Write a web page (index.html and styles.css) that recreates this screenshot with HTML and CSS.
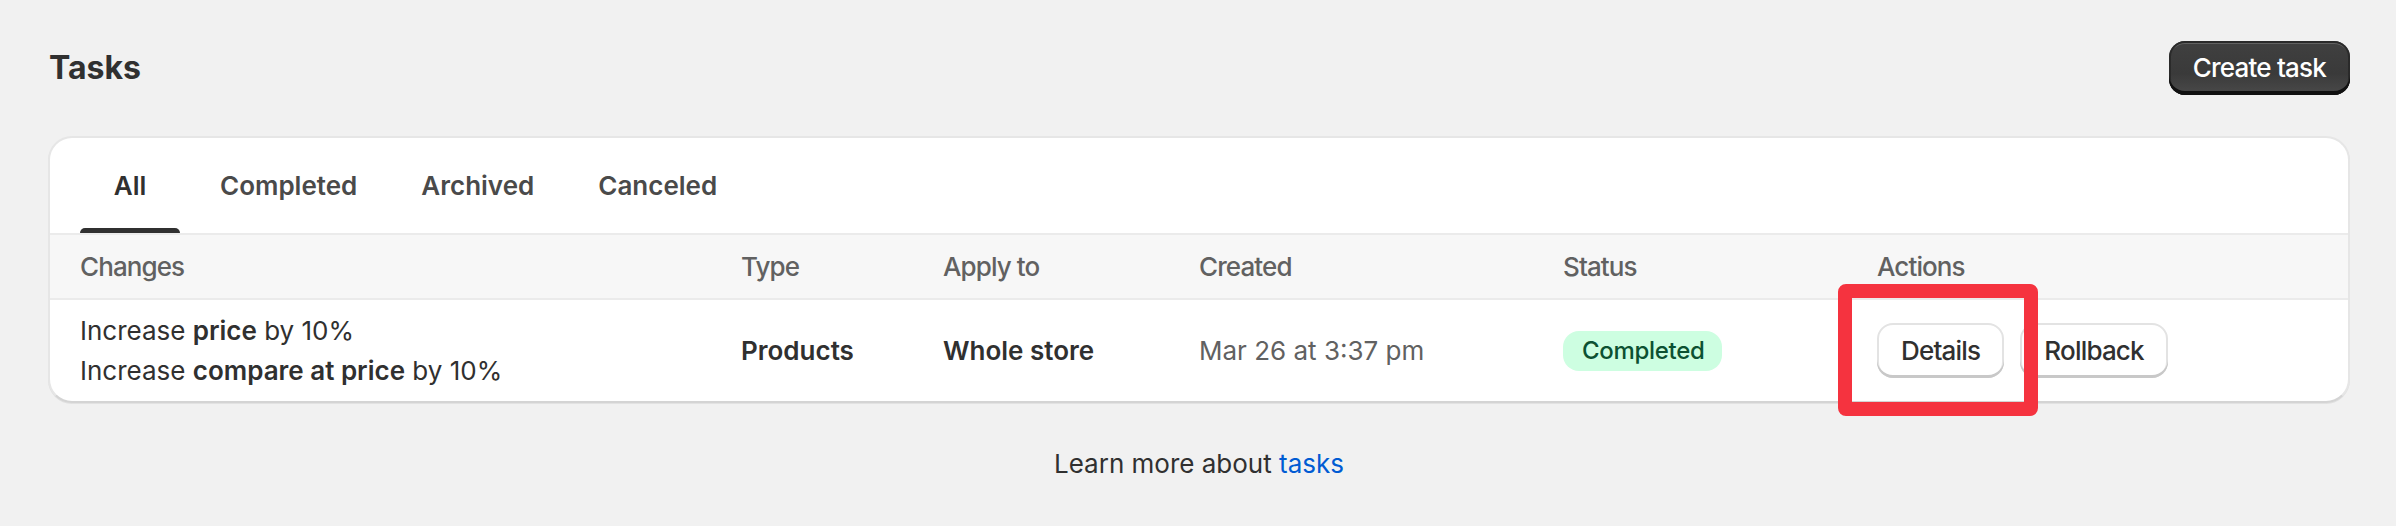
FILE: index.html
```html
<!DOCTYPE html>
<html lang="en">
  <head>
    <meta charset="UTF-8" />
    <meta name="viewport" content="width=device-width, initial-scale=1.0" />
    <title>Tasks</title>
    <link rel="stylesheet" href="styles.css">
  </head>
  <body>
    <div class="page">
      <div class="page-header">
        <h1 class="title">Tasks</h1>
        <button class="btn btn-primary">Create task</button>
      </div>

      <div class="card">
        <ul class="tabs">
          <li class="tab active">All</li>
          <li class="tab">Completed</li>
          <li class="tab">Archived</li>
          <li class="tab">Canceled</li>
        </ul>

        <div class="row head">
          <div class="cell">Changes</div>
          <div class="cell">Type</div>
          <div class="cell">Apply to</div>
          <div class="cell">Created</div>
          <div class="cell">Status</div>
          <div class="cell">Actions</div>
        </div>

        <div class="row body">
          <div class="cell changes">
            <div>Increase <b>price</b> by 10%</div>
            <div>Increase <b>compare at price</b> by 10%</div>
          </div>
          <div class="cell"><b>Products</b></div>
          <div class="cell"><b>Whole store</b></div>
          <div class="cell muted">Mar 26 at 3:37 pm</div>
          <div class="cell"><span class="badge">Completed</span></div>
          <div class="cell actions">
            <div class="highlight">
              <button class="btn">Details</button>
              <span class="mark"></span>
            </div>
            <button class="btn">Rollback</button>
          </div>
        </div>
      </div>

      <p class="footer">Learn more about <a href="#">tasks</a></p>
    </div>
  </body>
</html>
```

FILE: styles.css
```css
* {
  margin: 0;
  padding: 0;
  box-sizing: border-box;
}
body {
  background-color: #f1f1f1;
  color: #303030;
  font: 26px/40px "Inter", "Liberation Sans", sans-serif;
}

.page {
  padding: 41px 46px 0 48px;
}

.page-header {
  display: flex;
  justify-content: space-between;
  align-items: center;
  height: 54px;
}

.title {
  font-size: 32px;
  line-height: 40px;
  font-weight: 700;
  margin-left: 1px;
}

.btn {
  font: 500 26px/40px "Inter", "Liberation Sans", sans-serif;
  letter-spacing: -0.8px;
  color: #303030;
  background: #fff;
  border: none;
  border-radius: 16px;
  height: 55px;
  padding: 0 24px;
  box-shadow: inset 0 -3px 0 0 #c8c8c8, inset 0 0 0 2px #e3e3e3;
}

.btn-primary {
  color: #fff;
  height: 54px;
  letter-spacing: -0.8px;
  background: linear-gradient(180deg, #404040 0%, #3a3a3a 60%, #4a4a4a 100%);
  box-shadow: inset 0 -4px 0 0 #111, inset 0 0 0 2px #2a2a2a,
    inset 0 3px 0 0 rgba(255, 255, 255, 0.18);
}

.card {
  background: #fff;
  border: 2px solid #e6e6e6;
  border-bottom-color: #d4d4d4;
  border-radius: 24px;
  margin-top: 41px;
  box-shadow: 0 1px 0 rgba(26, 26, 26, 0.07);
}

.tabs {
  display: flex;
  list-style: none;
  height: 97px;
  padding-left: 30px;
  border-bottom: 2px solid #ebebeb;
}

.tab {
  position: relative;
  display: flex;
  align-items: center;
  justify-content: center;
  padding: 0 32px;
  font-weight: 600;
  color: #4a4a4a;
}

.tab.active {
  min-width: 100px;
  margin-right: 8px;
  color: #303030;
}

.tab.active::after {
  content: "";
  position: absolute;
  left: 0;
  right: 0;
  bottom: 0;
  height: 5px;
  border-radius: 5px 5px 0 0;
  background: #303030;
}

.row {
  display: grid;
  grid-template-columns: 661px 202px 256px 364px 314px 1fr;
  align-items: center;
  padding-left: 30px;
}

.row.head {
  height: 65px;
  background: #f7f7f7;
  border-bottom: 2px solid #ebebeb;
  color: #616161;
  font-weight: 500;
  letter-spacing: -0.9px;
}

.row.body {
  height: 101px;
}

b {
  font-weight: 600;
}

.muted {
  color: #616161;
}

.badge {
  display: inline-block;
  height: 40px;
  line-height: 40px;
  padding: 0 17px 0 19px;
  border-radius: 16px;
  background: #cdfee1;
  color: #0c5132;
  font-size: 24px;
  font-weight: 500;
  letter-spacing: -0.3px;
}

.actions {
  display: flex;
  gap: 16px;
}

.highlight {
  position: relative;
}

.mark {
  position: absolute;
  left: -39px;
  top: -39px;
  width: 200px;
  height: 132px;
  border: 14px solid #f5333f;
  border-radius: 8px;
  z-index: 2;
}

.footer {
  margin-top: 41px;
  text-align: center;
}

.footer a {
  color: #005bd3;
  text-decoration: none;
}
```
